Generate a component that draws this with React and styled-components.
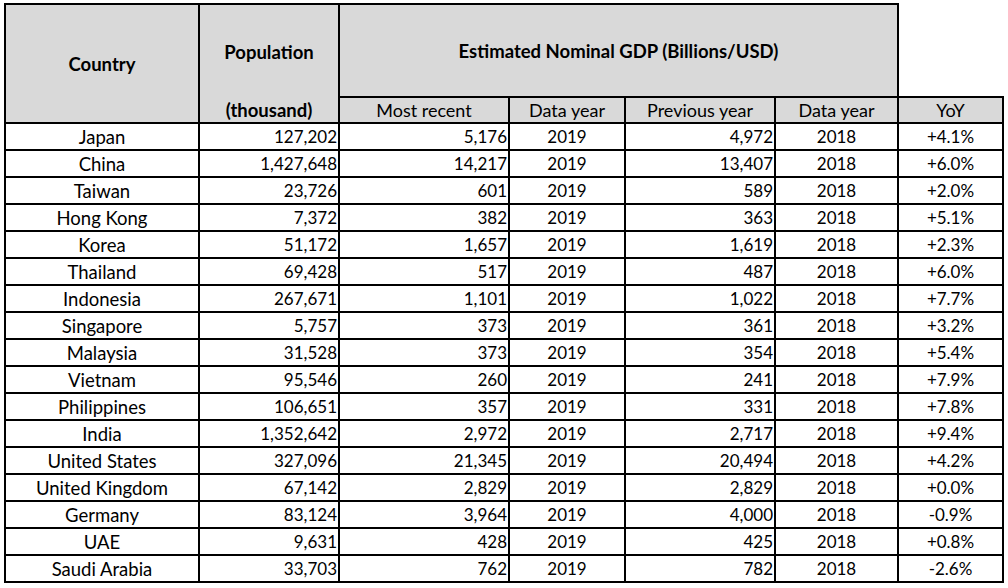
import React from 'react';
import styled, { createGlobalStyle } from 'styled-components';

const GlobalStyle = createGlobalStyle`
  body {
    margin: 0;
    background: #fff;
    font-family: Lato, "Open Sans", sans-serif;
    color: #000;
  }
`;

const rows = [
  ['Japan', '127,202', '5,176', '2019', '4,972', '2018', '+4.1%'],
  ['China', '1,427,648', '14,217', '2019', '13,407', '2018', '+6.0%'],
  ['Taiwan', '23,726', '601', '2019', '589', '2018', '+2.0%'],
  ['Hong Kong', '7,372', '382', '2019', '363', '2018', '+5.1%'],
  ['Korea', '51,172', '1,657', '2019', '1,619', '2018', '+2.3%'],
  ['Thailand', '69,428', '517', '2019', '487', '2018', '+6.0%'],
  ['Indonesia', '267,671', '1,101', '2019', '1,022', '2018', '+7.7%'],
  ['Singapore', '5,757', '373', '2019', '361', '2018', '+3.2%'],
  ['Malaysia', '31,528', '373', '2019', '354', '2018', '+5.4%'],
  ['Vietnam', '95,546', '260', '2019', '241', '2018', '+7.9%'],
  ['Philippines', '106,651', '357', '2019', '331', '2018', '+7.8%'],
  ['India', '1,352,642', '2,972', '2019', '2,717', '2018', '+9.4%'],
  ['United States', '327,096', '21,345', '2019', '20,494', '2018', '+4.2%'],
  ['United Kingdom', '67,142', '2,829', '2019', '2,829', '2018', '+0.0%'],
  ['Germany', '83,124', '3,964', '2019', '4,000', '2018', '-0.9%'],
  ['UAE', '9,631', '428', '2019', '425', '2018', '+0.8%'],
  ['Saudi Arabia', '33,703', '762', '2019', '782', '2018', '-2.6%'],
];

const columnWidths = [196, 140, 170, 116, 150, 123, 105];
const alignments = ['center', 'right', 'right', 'center', 'right', 'center', 'center'];

function GdpTable() {
  return (
    <Table>
      <colgroup>
        {columnWidths.map((w, i) => (
          <Col key={i} $width={w} />
        ))}
      </colgroup>
      <thead>
        <tr>
          <HeadCell rowSpan={2} $top $left $bold $height={121}>
            Country
          </HeadCell>
          <HeadCell $top $noBottom $bold $height={95}>
            Population
          </HeadCell>
          <HeadCell colSpan={4} $top $bold $height={95}>
            Estimated Nominal GDP (Billions/USD)
          </HeadCell>
          <BlankCell />
        </tr>
        <tr>
          <HeadCell $bold $height={26}>(thousand)</HeadCell>
          <HeadCell $height={26}>Most recent</HeadCell>
          <HeadCell $height={26}>Data year</HeadCell>
          <HeadCell $height={26}>Previous year</HeadCell>
          <HeadCell $height={26}>Data year</HeadCell>
          <HeadCell $height={26}>YoY</HeadCell>
        </tr>
      </thead>
      <tbody>
        {rows.map((row) => (
          <tr key={row[0]}>
            {row.map((value, i) => (
              <DataCell
                key={i}
                $align={alignments[i]}
                $left={i === 0}
                $label={i === 0}
              >
                {value}
              </DataCell>
            ))}
          </tr>
        ))}
      </tbody>
    </Table>
  );
}

export default function App() {
  return (
    <>
      <GlobalStyle />
      <Page>
        <GdpTable />
      </Page>
    </>
  );
}

const Page = styled.main`
  padding: 3px 0 0 4px;
`;

const Table = styled.table`
  border-collapse: separate;
  border-spacing: 0;
  table-layout: fixed;
  width: 1000px;
  font-size: 17px;
`;

const Col = styled.col`
  width: ${(p) => p.$width}px;
`;

const Cell = styled.td`
  box-sizing: border-box;
  padding: 0 2px;
  line-height: 20px;
  white-space: nowrap;
  border-right: 2px solid #000;
  border-bottom: 2px solid #000;
  border-left: ${(p) => (p.$left ? '2px solid #000' : 'none')};
`;

const HeadCell = styled(Cell).attrs({ as: 'th' })`
  height: ${(p) => p.$height}px;
  background: #d9d9d9;
  text-align: center;
  vertical-align: middle;
  font-size: ${(p) => (p.$bold ? '18.5px' : '18px')};
  font-weight: ${(p) => (p.$bold ? 700 : 400)};
  border-top: ${(p) => (p.$top ? '2px solid #000' : 'none')};
  border-bottom: ${(p) => (p.$noBottom ? 'none' : '2px solid #000')};
`;

const BlankCell = styled.th`
  box-sizing: border-box;
  padding: 0;
  border-bottom: 2px solid #000;
  background: #fff;
`;

const DataCell = styled(Cell)`
  height: 27px;
  padding: 1px ${(p) => (p.$align === 'right' ? '1px' : '2px')} 0 2px;
  text-align: ${(p) => p.$align};
  vertical-align: middle;
  font-size: ${(p) => (p.$label ? '18.5px' : '17px')};
`;
